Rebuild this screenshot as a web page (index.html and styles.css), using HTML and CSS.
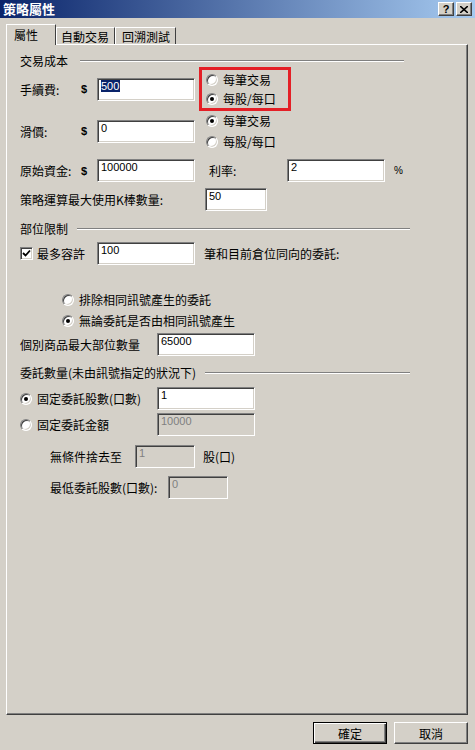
FILE: index.html
```html
<!DOCTYPE html>
<html lang="zh-Hant">

<head>
    <meta charset="UTF-8">
    <meta name="viewport" content="width=device-width, initial-scale=1.0">
    <title>策略屬性</title>
    <link rel="stylesheet" href="styles.css">
</head>

<body>
    <div class="dialog">
        <div class="titlebar">
            <span class="title">策略屬性</span>
            <div class="caption-buttons">
                <span class="cap-btn">?</span>
                <span class="cap-btn">
                    <svg width="8" height="7" viewBox="0 0 8 7"><path d="M0 0 L8 7 M8 0 L0 7" stroke="#000" stroke-width="1.6"/></svg>
                </span>
            </div>
        </div>

        <div class="tabs">
            <div class="tab active">屬性</div>
            <div class="tab second">自動交易</div>
            <div class="tab third">回溯測試</div>
        </div>

        <div class="panel">
            <div class="group-head short-rule"><span>交易成本</span><i class="rule"></i></div>

            <div class="row fee-one">
                <span class="lbl w61">手續費:</span>
                <span class="cur">$</span>
                <div class="field"><span class="sel">500</span></div>
                <div class="choices marked">
                    <div class="opt"><span class="radio"></span>每筆交易</div>
                    <div class="opt"><span class="radio on"></span>每股/每口</div>
                </div>
            </div>

            <div class="row fee-two">
                <span class="lbl w61">滑價:</span>
                <span class="cur">$</span>
                <div class="field">0</div>
                <div class="choices">
                    <div class="opt tall"><span class="radio on"></span>每筆交易</div>
                    <div class="opt tall"><span class="radio"></span>每股/每口</div>
                </div>
            </div>

            <div class="row mt7">
                <span class="lbl w61">原始資金:</span>
                <span class="cur">$</span>
                <div class="field">100000</div>
                <span class="lbl rate">利率:</span>
                <div class="field">2</div>
                <span class="pct">%</span>
            </div>

            <div class="row mt6">
                <span class="lbl w185">策略運算最大使用K棒數量:</span>
                <div class="field short">50</div>
            </div>

            <div class="group-head mt11"><span>部位限制</span><i class="rule"></i></div>

            <div class="row mt6">
                <span class="check">
                    <svg width="9" height="9" viewBox="0 0 9 9"><path d="M1 4 L3.5 6.5 L8 1.5" fill="none" stroke="#000" stroke-width="1.8"/></svg>
                </span>
                <span class="lbl allow">最多容許</span>
                <div class="field">100</div>
                <span class="lbl after">筆和目前倉位同向的委託:</span>
            </div>

            <div class="indent-opts">
                <div class="opt tall"><span class="radio"></span>排除相同訊號產生的委託</div>
                <div class="opt tall"><span class="radio on"></span>無論委託是否由相同訊號產生</div>
            </div>

            <div class="row mt2">
                <span class="lbl w137">個別商品最大部位數量</span>
                <div class="field">65000</div>
            </div>

            <div class="group-head mt10"><span>委託數量(未由訊號指定的狀況下)</span><i class="rule"></i></div>

            <div class="row mt7">
                <span class="opt w137"><span class="radio on"></span>固定委託股數(口數)</span>
                <div class="field">1</div>
            </div>

            <div class="row mt3">
                <span class="opt w137"><span class="radio"></span>固定委託金額</span>
                <div class="field off">10000</div>
            </div>

            <div class="row mt9 sub">
                <span class="lbl w85">無條件捨去至</span>
                <div class="field narrow off">1</div>
                <span class="lbl unit">股(口)</span>
            </div>

            <div class="row mt8 sub">
                <span class="lbl w118">最低委託股數(口數):</span>
                <div class="field narrow off">0</div>
            </div>
        </div>

        <div class="footer">
            <div class="btn default">確定</div>
            <div class="btn">取消</div>
        </div>
    </div>
</body>

</html>
```

FILE: styles.css
```css
* {
    box-sizing: border-box;
}

body {
    margin: 0;
    background: #d4d0c8;
    font-family: "Noto Sans CJK TC", "Noto Sans CJK SC", sans-serif;
    font-size: 12px;
    color: #000;
}

.dialog {
    width: 475px;
    height: 750px;
    overflow: hidden;
}

/* title bar */
.titlebar {
    height: 18px;
    background: linear-gradient(to right, #0a246a, #a6caf0);
    display: flex;
    align-items: center;
    justify-content: space-between;
    padding: 0 3px;
}

.title {
    color: #fff;
    font-weight: bold;
    font-size: 13px;
    line-height: 18px;
}

.caption-buttons {
    display: flex;
    gap: 2px;
}

.cap-btn {
    width: 16px;
    height: 14px;
    background: #d4d0c8;
    border: 1px solid;
    border-color: #fff #404040 #404040 #fff;
    box-shadow: inset -1px -1px 0 #808080;
    display: flex;
    align-items: center;
    justify-content: center;
    font: bold 11px "Liberation Sans", sans-serif;
}

/* tabs */
.tabs {
    display: flex;
    align-items: flex-end;
    height: 26px;
    padding-left: 6px;
}

.tab {
    height: 17px;
    border: 1px solid;
    border-bottom: none;
    border-color: #fff #404040 transparent #fff;
    line-height: 17px;
    white-space: nowrap;
}

.tab.active {
    width: 50px;
    height: 21px;
    margin-bottom: -1px;
    padding-left: 7px;
    line-height: 19px;
    background: #d4d0c8;
    position: relative;
    z-index: 1;
}

.tab.second {
    width: 59px;
    padding-left: 4px;
}

.tab.third {
    width: 61px;
    padding-left: 6px;
}

/* panel */
.panel {
    margin-left: 6px;
    width: 462px;
    height: 671px;
    border: 1px solid;
    border-color: #fff #404040 #404040 #fff;
    box-shadow: inset -1px -1px 0 #808080;
    padding: 9px 57px 0 13px;
}

.group-head {
    display: flex;
    align-items: center;
    height: 14px;
    line-height: 14px;
    white-space: nowrap;
}

.group-head .rule {
    flex: 1;
    height: 2px;
    margin-left: 9px;
    border-top: 1px solid #808080;
    border-bottom: 1px solid #fff;
}

.group-head.short-rule .rule {
    margin-left: 12px;
    margin-right: 6px;
}

.row {
    display: flex;
    align-items: center;
    white-space: nowrap;
}

.lbl {
    flex: none;
}

.w61 { width: 61px; }
.w85 { width: 85px; }
.w118 { width: 118px; }
.w137 { width: 137px; }
.w185 { width: 185px; }

.mt2 { margin-top: 2px; }
.mt3 { margin-top: 3px; }
.mt6 { margin-top: 6px; }
.mt7 { margin-top: 7px; }
.mt8 { margin-top: 8px; }
.mt9 { margin-top: 9px; }
.mt10 { margin-top: 10px; }
.mt11 { margin-top: 11px; }

.cur {
    width: 16px;
    font: bold 11px "Liberation Sans", sans-serif;
}

.rate {
    width: 78px;
    margin-left: 14px;
}

.pct {
    margin-left: 9px;
    font: 10px "Liberation Sans", sans-serif;
}

.allow {
    margin-left: 4px;
    width: 60px;
}

.after {
    margin-left: 9px;
}

.unit {
    margin-left: 8px;
}

.sub {
    padding-left: 30px;
}

/* inputs */
.field {
    flex: none;
    width: 98px;
    height: 23px;
    background: #fff;
    border: 1px solid;
    border-color: #808080 #fff #fff #808080;
    box-shadow: inset 1px 1px 0 #404040, inset -1px -1px 0 #d4d0c8;
    padding: 1px 0 0 3px;
    font: 11px/13px "Liberation Sans", sans-serif;
}

.field.short { width: 62px; }
.field.narrow { width: 60px; }

.field.off {
    background: #d4d0c8;
    color: #808080;
}

.sel {
    background: #0a246a;
    color: #fff;
    padding-right: 1px;
}

/* fee rows */
.fee-one {
    margin-top: -1px;
    height: 44px;
}

.fee-two {
    margin-top: -1px;
    height: 42px;
}

.choices {
    margin-left: 4px;
    padding-left: 7px;
}

.choices.marked {
    width: 92px;
    height: 44px;
    border: 3px solid #e41f26;
    padding: 0 0 0 4px;
}

/* radios and checkbox */
.opt {
    display: flex;
    align-items: center;
    gap: 5px;
    height: 19px;
    white-space: nowrap;
}

.opt.tall {
    height: 21px;
}

.radio {
    flex: none;
    width: 12px;
    height: 12px;
    border-radius: 50%;
    background: #fff;
    border: 1px solid;
    border-color: #808080 #fff #fff #808080;
    box-shadow: inset 1px 1px 0 #404040, inset -1px -1px 0 #d4d0c8;
    position: relative;
}

.radio.on::after {
    content: "";
    position: absolute;
    left: 3px;
    top: 3px;
    width: 4px;
    height: 4px;
    border-radius: 50%;
    background: #000;
}

.check {
    flex: none;
    width: 13px;
    height: 13px;
    background: #fff;
    border: 1px solid;
    border-color: #808080 #fff #fff #808080;
    box-shadow: inset 1px 1px 0 #404040, inset -1px -1px 0 #d4d0c8;
    display: flex;
    align-items: center;
    justify-content: center;
}

.indent-opts {
    margin-top: 24px;
    padding-left: 42px;
}

/* footer */
.footer {
    display: flex;
    justify-content: flex-end;
    gap: 7px;
    padding-right: 7px;
    margin-top: 7px;
}

.btn {
    width: 74px;
    height: 22px;
    border: 1px solid;
    border-color: #fff #404040 #404040 #fff;
    box-shadow: inset -1px -1px 0 #808080;
    display: flex;
    align-items: center;
    justify-content: center;
}

.btn.default {
    border-color: #000;
    box-shadow: inset 1px 1px 0 #fff, inset -1px -1px 0 #404040, inset -2px -2px 0 #808080;
}
```
